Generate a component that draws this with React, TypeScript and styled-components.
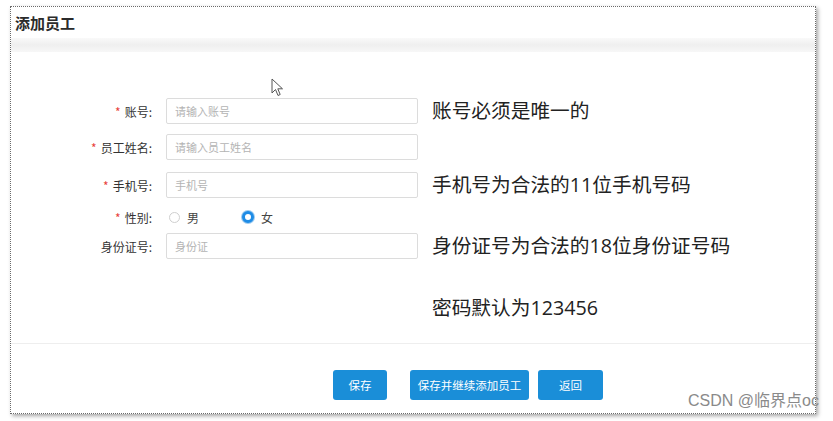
import React from "react";
import styled, { createGlobalStyle } from "styled-components";

const Global = createGlobalStyle`
  html, body { margin: 0; padding: 0; background: #fff; }
  body { font-family: "Noto Sans CJK SC", "Noto Sans", sans-serif; color: #333; }
`;

const Page = styled.div`
  width: 833px;
  height: 421px;
  padding: 6px 0 0 10px;
  box-sizing: border-box;
  position: relative;
  overflow: hidden;
`;

const Frame = styled.div`
  position: relative;
  width: 806px;
  height: 408px;
  box-sizing: border-box;
  border: 1px dotted #6a6a6a;
  box-shadow: 2px 2px 4px rgba(0, 0, 0, 0.35);
  background: #fff;
  display: flex;
  flex-direction: column;
`;

const Header = styled.div`
  height: 31px;
  display: flex;
  align-items: center;
  padding-left: 4px;
  font-size: 15px;
  font-weight: 700;
  color: #2b2b2b;
`;

const Band = styled.div`
  height: 14px;
  background: linear-gradient(#f9f9f9, #efefef 50%, #f7f7f7);
`;

const Form = styled.div`
  display: flex;
  flex-direction: column;
  height: 291px;
  border-bottom: 1px solid #eeeeee;
`;

const Row = styled.div<{ $top: number }>`
  display: grid;
  grid-template-columns: 143px 252px auto;
  column-gap: 12px;
  height: 26px;
  margin-top: ${(p) => p.$top}px;
  align-items: center;
`;

const Label = styled.div`
  text-align: right;
  padding-right: 2px;
  font-size: 12px;
  color: #333;
  white-space: nowrap;
`;

const Star = styled.span`
  color: #e8423b;
  margin-right: 4px;
`;

const Input = styled.input`
  box-sizing: border-box;
  width: 252px;
  height: 26px;
  border: 1px solid #dcdcdc;
  border-radius: 2px;
  padding: 0 8px;
  font-family: "Noto Sans CJK SC", sans-serif;
  font-size: 11px;
  color: #333;
  outline: none;
  &::placeholder { color: #b4b4b4; }
`;

const Note = styled.div`
  padding-left: 2px;
  font-family: "Open Sans", "Noto Sans CJK SC", sans-serif;
  font-size: 19.7px;
  color: #222;
  white-space: nowrap;
  line-height: 26px;
`;

const RadioGroup = styled.div`
  display: flex;
  align-items: center;
  padding-left: 3px;
  font-size: 12px;
  color: #444;
`;

const RadioItem = styled.label<{ $width: number }>`
  display: flex;
  align-items: center;
  gap: 7px;
  width: ${(p) => p.$width}px;
`;

const Circle = styled.span<{ $on?: boolean }>`
  box-sizing: border-box;
  width: ${(p) => (p.$on ? 12 : 11)}px;
  height: ${(p) => (p.$on ? 12 : 11)}px;
  border-radius: 50%;
  border: ${(p) => (p.$on ? "3px solid #1e8ce6" : "1px solid #cfcfcf")};
  background: #fff;
  box-shadow: ${(p) => (p.$on ? "0 0 0 1px #9ccaf0" : "none")};
`;

const Footer = styled.div`
  display: flex;
  align-items: flex-start;
  padding: 26px 0 0 322px;
  gap: 9px;
`;

const Button = styled.button<{ $w: number; $extra?: number }>`
  width: ${(p) => p.$w}px;
  height: 30px;
  margin-right: ${(p) => p.$extra ?? 0}px;
  border: none;
  border-radius: 3px;
  background: #1a8ed8;
  color: #fff;
  font-family: "Noto Sans CJK SC", sans-serif;
  font-size: 11.5px;
  padding: 0;
`;

const Watermark = styled.div`
  position: absolute;
  left: 688px;
  top: 392px;
  font-family: "Liberation Sans", "Noto Sans CJK SC", sans-serif;
  font-size: 16px;
  line-height: 18px;
  color: #8a8a8a;
  white-space: nowrap;
`;

const Cursor = styled.svg`
  position: absolute;
  left: 260px;
  top: 71px;
`;

export default function App() {
  return (
    <Page>
      <Global />
      <Frame>
        <Header>添加员工</Header>
        <Band />
        <Form>
          <Row $top={46}>
            <Label><Star>*</Star>账号:</Label>
            <Input placeholder="请输入账号" />
            <Note>账号必须是唯一的</Note>
          </Row>
          <Row $top={10}>
            <Label><Star>*</Star>员工姓名:</Label>
            <Input placeholder="请输入员工姓名" />
            <Note />
          </Row>
          <Row $top={12}>
            <Label><Star>*</Star>手机号:</Label>
            <Input placeholder="手机号" />
            <Note>手机号为合法的11位手机号码</Note>
          </Row>
          <Row $top={6}>
            <Label><Star>*</Star>性别:</Label>
            <RadioGroup>
              <RadioItem $width={73}><Circle />男</RadioItem>
              <RadioItem $width={60}><Circle $on />女</RadioItem>
            </RadioGroup>
            <Note />
          </Row>
          <Row $top={3}>
            <Label>身份证号:</Label>
            <Input placeholder="身份证" />
            <Note>身份证号为合法的18位身份证号码</Note>
          </Row>
          <Row $top={36}>
            <Label />
            <div />
            <Note>密码默认为123456</Note>
          </Row>
        </Form>
        <Footer>
          <Button $w={54} $extra={14}>保存</Button>
          <Button $w={119}>保存并继续添加员工</Button>
          <Button $w={65}>返回</Button>
        </Footer>
        <Cursor width="14" height="20" viewBox="0 0 14 20">
          <path
            d="M1 1 L1 15 L4.5 11.5 L7 17.5 L9.2 16.5 L6.8 10.8 L11.5 10.8 Z"
            fill="#fff"
            stroke="#555"
            strokeWidth="1"
            strokeLinejoin="round"
          />
        </Cursor>
      </Frame>
      <Watermark>CSDN @临界点oc</Watermark>
    </Page>
  );
}
